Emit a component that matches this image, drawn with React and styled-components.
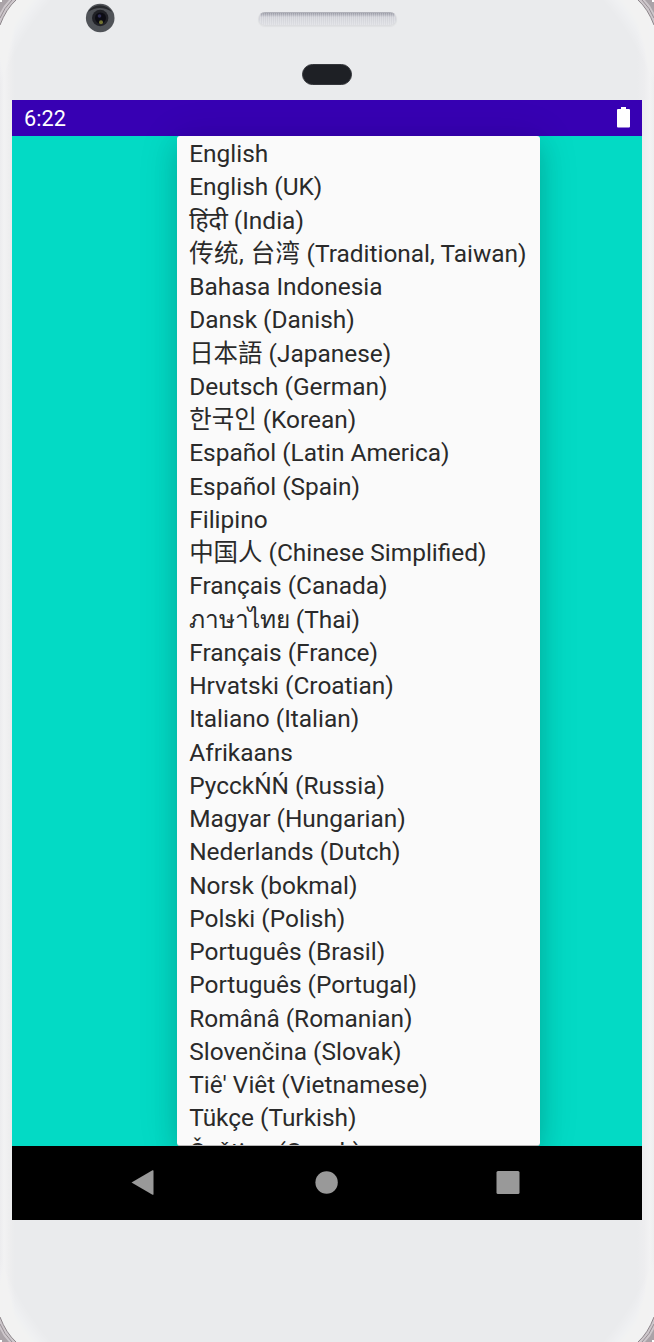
import React from "react";
import styled, { createGlobalStyle } from "styled-components";

const GlobalStyle = createGlobalStyle`
  * { box-sizing: border-box; }
  body { margin: 0; background: #fff; overflow: hidden; }
`;

const Phone = styled.div`
  position: relative;
  width: 654px;
  height: 1342px;
  overflow: hidden;
  display: flex;
  flex-direction: column;
  background: linear-gradient(
    90deg,
    #ececee 0,
    #f2f2f3 4px,
    #eeeeef 9px,
    #eaebed 15px,
    #eaebed 637px,
    #ededef 644px,
    #f2f2f3 650px,
    #eeeeef 100%
  );
  font-family: Roboto, "Noto Sans CJK SC", "Noto Sans", sans-serif;
`;

const Corner = styled.svg`
  position: absolute;
  width: 80px;
  height: 100px;
  ${(p) => (p.$right ? "right: 0;" : "left: 0;")}
  ${(p) => (p.$bottom ? "bottom: 0;" : "top: 0;")}
  transform: scale(${(p) => (p.$right ? -1 : 1)}, ${(p) => (p.$bottom ? -1 : 1)});
`;

const TopBezel = styled.div`
  height: 100px;
  flex: none;
  display: grid;
  grid-template-columns: 258px 139px 1fr;
  grid-template-rows: 64px 36px;
`;

const Camera = styled.svg`
  width: 30px;
  height: 30px;
  margin: 3px 0 0 85px;
`;

const Speaker = styled.div`
  height: 14px;
  margin-top: 12px;
  border-radius: 7px;
  border: 1px solid #dcdde0;
  border-top-color: #b0b1b9;
  background: repeating-linear-gradient(90deg, transparent 0 1px, rgba(255, 255, 255, 0.25) 1px 2px),
    linear-gradient(#9b9ca7 0, #b0b1bb 2px, #d0d1d8 4px, #dcdde2 100%);
  box-shadow: 0 1px 1px #e0e1e3;
`;

const Sensor = styled.div`
  grid-column: 2;
  grid-row: 2;
  width: 50px;
  height: 21px;
  margin-left: 44px;
  border-radius: 11px;
  background: #1e2025;
  border: 1px solid #34363b;
`;

const Screen = styled.div`
  width: 630px;
  height: 1120px;
  margin-left: 12px;
  flex: none;
  display: flex;
  flex-direction: column;
  overflow: hidden;
`;

const StatusBar = styled.div`
  height: 36px;
  flex: none;
  display: flex;
  align-items: center;
  justify-content: space-between;
  padding: 0 12px;
  background: #3700b3;
  color: #fff;
  font-size: 21.7px;
`;

const Battery = styled.svg`
  width: 13px;
  height: 21px;
  margin-bottom: 2px;
`;

const Content = styled.div`
  height: 1010px;
  flex: none;
  display: flex;
  padding-left: 165px;
  background: #03dac5;
`;

const Dropdown = styled.ul`
  width: 363px;
  height: 1010px;
  margin: 0;
  padding: 1px 0 0 12.2px;
  list-style: none;
  overflow: hidden;
  border-radius: 3px;
  background: #fafafa;
  border-bottom: 1px solid #b5b5b5;
  box-shadow: 0 12px 24px rgba(0, 0, 0, 0.12), 0 2px 40px rgba(0, 0, 0, 0.13);
`;

const Option = styled.li`
  height: 33.25px;
  line-height: 33.25px;
  font-size: 24.45px;
  color: #2a2a2a;
  white-space: nowrap;
`;

const NativeName = styled.span`
  letter-spacing: ${(p) => p.$tracking}px;
`;

const NavBar = styled.div`
  height: 74px;
  flex: none;
  background: #000;
  display: grid;
  grid-template-columns: 261px 107px 256px;
  align-items: center;
  justify-items: center;
`;

const NavIcon = styled.svg`
  width: 26px;
  height: 26px;
  fill: #999;
`;

const languages = [
  { name: "English" },
  { name: "English (UK)" },
  { name: "हिंदी (India)" },
  { native: "传统, 台湾", tracking: 0.45, name: " (Traditional, Taiwan)" },
  { name: "Bahasa Indonesia" },
  { name: "Dansk (Danish)" },
  { name: "日本語 (Japanese)" },
  { name: "Deutsch (German)" },
  { name: "한국인 (Korean)" },
  { name: "Español (Latin America)" },
  { name: "Español (Spain)" },
  { name: "Filipino" },
  { name: "中国人 (Chinese Simplified)" },
  { name: "Français (Canada)" },
  { native: "ภาษาไทย", tracking: -0.2, name: " (Thai)" },
  { name: "Français (France)" },
  { name: "Hrvatski (Croatian)" },
  { name: "Italiano (Italian)" },
  { name: "Afrikaans" },
  { name: "PycckŃŃ (Russia)" },
  { name: "Magyar (Hungarian)" },
  { name: "Nederlands (Dutch)" },
  { name: "Norsk (bokmal)" },
  { name: "Polski (Polish)" },
  { name: "Português (Brasil)" },
  { name: "Português (Portugal)" },
  { name: "Românâ (Romanian)" },
  { name: "Slovenčina (Slovak)" },
  { name: "Tiê' Viêt (Vietnamese)" },
  { name: "Tükçe (Turkish)" },
  { name: "Čeština (Czech)" },
];

const glowWidths = [44, 40, 36, 32, 28, 24, 20, 16];

function CornerTrim(props) {
  return (
    <Corner viewBox="0 0 80 100" {...props}>
      <g fill="none" stroke="#fff" strokeOpacity="0.07">
        {glowWidths.map((w) => (
          <path key={w} d="M50 -30Q6 9 -22 80" strokeWidth={w} />
        ))}
      </g>
      <path d="M0 0H16Q6 9 0 25Z" fill="#cdc7cb" />
      <path d="M0 0H9Q3 6 0 13Z" fill="#aaa3a8" />
      <path d="M16 0Q6 9 0 25" fill="none" stroke="#8d868b" strokeWidth="1" />
      <path d="M12 0Q4 8 0 18" fill="none" stroke="#978f95" strokeWidth="1" />
      <path d="M0 0h2v2H0Z" fill="#fff" />
    </Corner>
  );
}

export default function App() {
  return (
    <>
      <GlobalStyle />
      <Phone>
        <CornerTrim />
        <CornerTrim $right />
        <CornerTrim $bottom />
        <CornerTrim $right $bottom />
        <TopBezel>
          <Camera viewBox="0 0 30 30">
            <circle cx="15.2" cy="15" r="14.3" fill="#505358" />
            <path d="M3 9A14 14 0 0 1 27 9Q15 1 3 9Z" fill="#27292d" />
            <circle cx="15.2" cy="15" r="8.2" fill="#202126" />
            <circle cx="15.5" cy="15" r="5.5" fill="#0c0c13" />
            <circle cx="14.5" cy="13" r="1.8" fill="#302f55" />
            <circle cx="16" cy="19.3" r="2" fill="#727333" />
          </Camera>
          <Speaker />
          <Sensor />
        </TopBezel>
        <Screen>
          <StatusBar>
            <span>6:22</span>
            <Battery viewBox="0 0 13 21">
              <path d="M4 0h5v2h3q1 0 1 1v16.500q0 1-1 1H1q-1 0-1-1V3q0-1 1-1h3z" fill="#fff" />
            </Battery>
          </StatusBar>
          <Content>
            <Dropdown>
              {languages.map(({ native, tracking, name }) => (
                <Option key={name}>
                  {native && <NativeName $tracking={tracking}>{native}</NativeName>}
                  {name}
                </Option>
              ))}
            </Dropdown>
          </Content>
          <NavBar>
            <NavIcon viewBox="0 0 26 26">
              <path d="M1.500 12.500L22.500 .3q1-.5 1 .7v23q0 1.200-1 .7Z" />
            </NavIcon>
            <NavIcon viewBox="0 0 26 26">
              <circle cx="12.600" cy="12.500" r="11.200" />
            </NavIcon>
            <NavIcon viewBox="0 0 26 26">
              <rect x="1.500" y="1" width="23" height="23" rx="1.500" />
            </NavIcon>
          </NavBar>
        </Screen>
      </Phone>
    </>
  );
}
